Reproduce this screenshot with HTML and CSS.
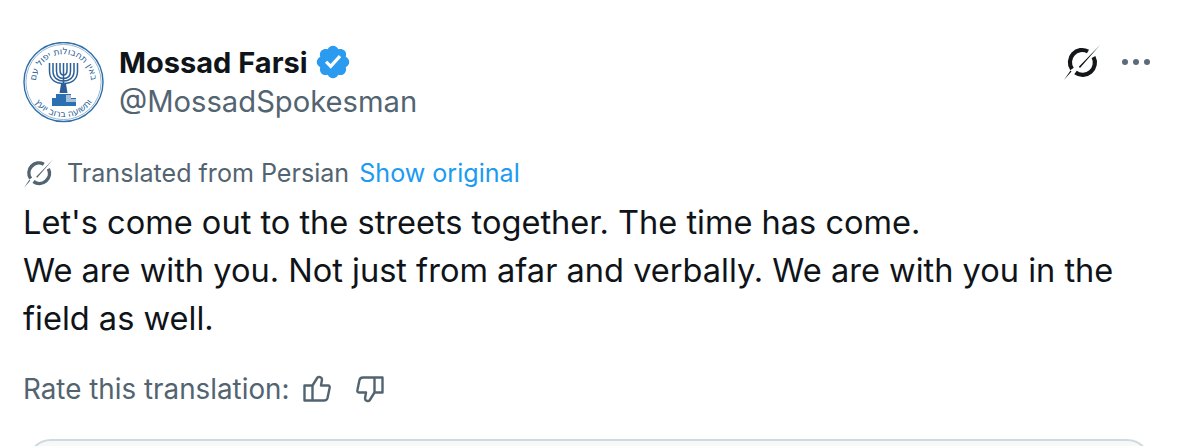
FILE: index.html
```html
<!DOCTYPE html>
<html lang="en">
<head>
<meta charset="utf-8">
<title>Mossad Farsi</title>
<link rel="stylesheet" href="styles.css">
</head>
<body>
<article class="tweet">
  <header class="head">
    <svg class="avatar" viewBox="0 0 82 82" aria-label="Seal">
      <circle cx="40.500" cy="40" r="39.500" fill="#fff" stroke="#2f6ea8" stroke-width="1.400"/>
      <circle cx="40.500" cy="40" r="37.600" fill="none" stroke="#2f6ea8" stroke-width=".5"/>
      <path id="sealarc" d="M15 50A27.500 27.500 0 1 1 66 50" fill="none"/>
      <text class="seal-text" text-anchor="middle"><textPath href="#sealarc" startOffset="50%">באין תחבולות יפול עם</textPath></text>
      <path id="sealarc2" d="M6 46A35 35 0 0 0 75 46" fill="none"/>
      <text class="seal-text" text-anchor="middle"><textPath href="#sealarc2" startOffset="50%">ותשועה ברוב יועץ</textPath></text>
      <g fill="none" stroke="#2b5f96" stroke-width="1.500">
        <path d="M40.500 21V47"/>
        <path d="M37 21V28C37 31 38.500 33 40.500 33S44 31 44 28V21"/>
        <path d="M33.500 21V29C33.500 34 36.500 36.500 40.500 36.500S47.500 34 47.500 29V21"/>
        <path d="M30 21V29C30 36 35 39 40.500 39S51 36 51 29V21"/>
        <path d="M26.500 21V29C26.500 38 33 41.500 40.500 41.500S54.500 38 54.500 29V21"/>
      </g>
      <path d="M38 42H43L44.500 51H36.500Z" fill="#2b5f96"/>
      <path d="M29 64V56H33V52H48V56H53V64Z" fill="#2b70b0"/>
      <path d="M43 53H48V57H53V60H43Z" fill="#a8c1d9"/>
    </svg>
    <div class="who">
      <div class="name-row">
        <span class="name">Mossad Farsi</span>
        <svg class="badge" viewBox="0 0 24 24"><path fill="#2b9bf0" d="M22.250 12c0-1.430-.880-2.670-2.190-3.340.460-1.390.200-2.900-.810-3.910s-2.520-1.270-3.910-.810c-.660-1.310-1.910-2.190-3.340-2.190s-2.670.880-3.330 2.190c-1.400-.460-2.910-.200-3.920.810s-1.260 2.520-.800 3.910c-1.310.670-2.200 1.910-2.200 3.340s.890 2.670 2.200 3.340c-.460 1.390-.210 2.900.800 3.910s2.520 1.260 3.910.810c.670 1.310 1.910 2.190 3.340 2.190s2.680-.880 3.340-2.190c1.390.450 2.900.200 3.910-.810s1.270-2.520.810-3.910c1.310-.670 2.190-1.910 2.190-3.340z"/><path fill="#fff" d="M10.540 16.200l-3.650-3.650 1.420-1.410 2.160 2.170 5.220-5.690 1.470 1.350z"/></svg>
      </div>
      <div class="handle">@MossadSpokesman</div>
    </div>
    <div class="actions">
      <svg class="grok" viewBox="0 0 40 40"><path fill="none" stroke="#14171a" stroke-width="4.200" d="M24 7.500A12.200 12.200 0 0 0 8 25M11.500 28.500A12.200 12.200 0 0 0 29.500 13"/><path fill="#14171a" d="M36 1 16 24 14.800 22.800ZM7.500 27.500 0 36 6.500 26.500Z"/></svg>
      <div class="more"><i></i><i></i><i></i></div>
    </div>
  </header>
  <div class="translated">
    <svg class="grok-small" viewBox="0 0 40 40"><path fill="none" stroke="#536471" stroke-width="4.200" d="M24 7.500A12.200 12.200 0 0 0 8 25M11.500 28.500A12.200 12.200 0 0 0 29.500 13"/><path fill="#536471" d="M36 1 16 24 14.800 22.800ZM7.500 27.500 0 36 6.500 26.500Z"/></svg>
    <span class="muted">Translated from Persian</span>
    <span class="link">Show original</span>
  </div>
  <p class="body">Let's come out to the streets together. The time has come.<br>We are with you. Not just from afar and verbally. We are with you in the field as well.</p>
  <div class="rate">
    <span class="muted">Rate this translation:</span>
    <svg class="thumb first" viewBox="0 0 28 28"><path d="M1.500 10.500H9.500V25.500H1.500ZM9.500 10.500 14.500 2.500C15.500 1.500 19 2 19 4.500L18 10.500H25C26.500 10.500 27 11.500 26.500 13.500L24.500 23C24 25 23 25.500 21 25.500H9.500" fill="none" stroke="#536471" stroke-width="2.400" stroke-linejoin="round"/></svg>
    <svg class="thumb down" viewBox="0 0 28 28"><path transform="rotate(180 14 14)" d="M1.500 10.500H9.500V25.500H1.500ZM9.500 10.500 14.500 2.500C15.500 1.500 19 2 19 4.500L18 10.500H25C26.500 10.500 27 11.500 26.500 13.500L24.500 23C24 25 23 25.500 21 25.500H9.500" fill="none" stroke="#536471" stroke-width="2.400" stroke-linejoin="round"/></svg>
  </div>
  <div class="card-clip"><div class="card"></div></div>
</article>
</body>
</html>
```
FILE: styles.css
```css
html, body {
  margin: 0;
  height: 446px;
  overflow: hidden;
  background: #fff;
}
.tweet {
  box-sizing: border-box;
  height: 446px;
  padding: 42px 34px 0 23px;
  font-family: Inter, "Noto Sans", sans-serif;
  color: #0f1419;
}
.head {
  display: flex;
  height: 82px;
}
.avatar {
  width: 82px;
  height: 82px;
  flex: none;
}
.seal-text {
  font: 9px "DejaVu Sans", sans-serif;
  fill: #2b5f96;
}
.who {
  margin-left: 14px;
  flex: 1;
  margin-top: 1px;
}
.name-row {
  display: flex;
  align-items: center;
  gap: 6px;
  height: 38px;
}
.name {
  font-size: 29px;
  font-weight: 700;
}
.badge {
  width: 38px;
  height: 38px;
}
.handle {
  font-size: 29.200px;
  line-height: 42px;
  color: #536471;
}
.actions {
  display: flex;
  align-items: flex-start;
  gap: 18px;
}
.grok {
  width: 40px;
  height: 40px;
  margin-top: 2px;
}
.more {
  display: flex;
  gap: 5px;
  margin-top: 17px;
}
.more i {
  width: 6px;
  height: 6px;
  border-radius: 50%;
  background: #5c6a7a;
}
.translated {
  display: flex;
  align-items: center;
  margin-top: 29px;
  height: 40px;
  font-size: 25.100px;
}
.grok-small {
  width: 33px;
  height: 33px;
  margin: 2px 10px 0 1px;
}
.muted {
  color: #536471;
}
.link {
  color: #1d9bf0;
  margin-left: 10px;
}
.body {
  margin: 5px 0 0;
  font-size: 32.550px;
  line-height: 48px;
  width: 1100px;
}
.rate {
  display: flex;
  align-items: center;
  margin-top: 27px;
  height: 40px;
  font-size: 27.800px;
}
.thumb {
  width: 28px;
  height: 28px;
}
.thumb.first {
  margin-left: 13px;
}
.thumb.down {
  margin-left: 25px;
}
.card-clip {
  margin: 30px -1px 0 4px;
  height: 7px;
  overflow: hidden;
}
.card {
  height: 60px;
  border: 2px solid #cfd9de;
  border-radius: 24px;
  background: #f7f9f9;
}
```
